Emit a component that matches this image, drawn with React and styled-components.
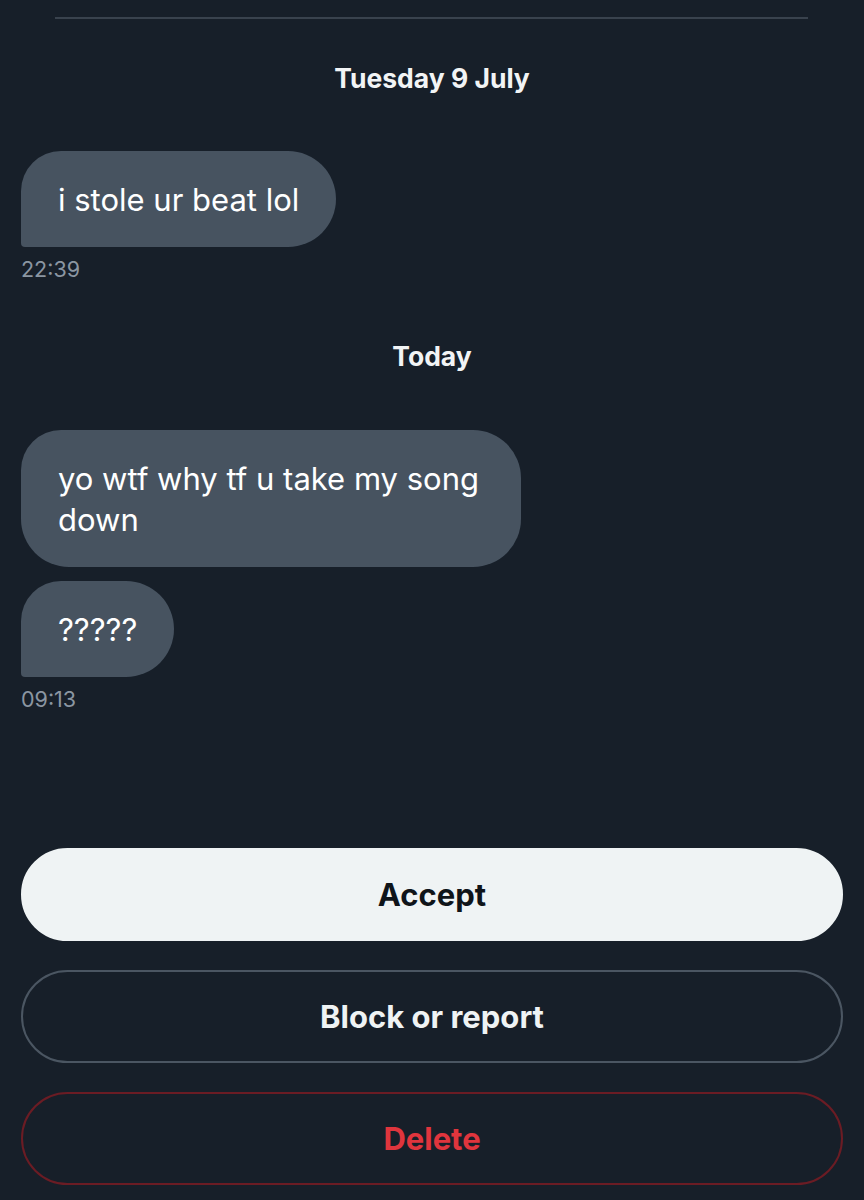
import styled, { createGlobalStyle } from 'styled-components';

const messages = [
  {
    day: 'Tuesday 9 July',
    groups: [{ bubbles: ['i stole ur beat lol'], time: '22:39' }],
  },
  {
    day: 'Today',
    groups: [{ bubbles: ['yo wtf why tf u take my song down', '?????'], time: '09:13' }],
  },
];

const App = () => {
  return (
    <Screen>
      <GlobalStyle />
      <Divider />
      {messages.map(section => (
        <Section key={section.day}>
          <DayLabel>{section.day}</DayLabel>
          {section.groups.map((group, i) => (
            <Group key={i}>
              {group.bubbles.map((text, j) => (
                <Bubble key={j} last={j === group.bubbles.length - 1}>
                  {text}
                </Bubble>
              ))}
              <Time>{group.time}</Time>
            </Group>
          ))}
        </Section>
      ))}
      <Actions>
        <Button variant="primary">Accept</Button>
        <Button>Block or report</Button>
        <Button variant="danger">Delete</Button>
      </Actions>
    </Screen>
  );
}

const GlobalStyle = createGlobalStyle`
  html, body {
    margin: 0;
    padding: 0;
    background: #171f29;
  }
  * {
    box-sizing: border-box;
  }
`

const Screen = styled.div`
  font-family: 'Inter', 'Noto Sans', sans-serif;
  background-color: #171f29;
  color: #e7e9ea;
  min-height: 100vh;
  display: flex;
  flex-direction: column;
  padding: 17px 21px 15px;
`

const Divider = styled.div`
  height: 2px;
  background-color: #39424d;
  margin: 0 35px 0 34px;
`

const Section = styled.div`
  display: flex;
  flex-direction: column;
`

const DayLabel = styled.div`
  text-align: center;
  font-weight: 700;
  font-size: 26.5px;
  line-height: 32px;
  color: #f2f4f5;
  margin-top: 43px;
  margin-bottom: 57px;
  ${Section} + ${Section} & {
    margin-top: 58px;
    margin-bottom: 58px;
  }
`

const Group = styled.div`
  display: flex;
  flex-direction: column;
  align-items: flex-start;
  gap: 14px;
`

const Bubble = styled.div`
  max-width: 500px;
  background-color: #475360;
  color: #ffffff;
  font-size: 31px;
  line-height: 41px;
  padding: 27.5px 37px;
  border-radius: ${props => props.last ? '40px 48px 48px 4px' : '40px 48px 48px 48px'};
`

const Time = styled.div`
  font-size: 21.5px;
  line-height: 26px;
  color: #8b96a2;
  margin-top: -5px;
`

const Actions = styled.div`
  margin-top: auto;
  display: flex;
  flex-direction: column;
  gap: 29px;
`

const Button = styled.button`
  height: 93px;
  width: 100%;
  border-radius: 47px;
  font-family: 'Inter', 'Noto Sans', sans-serif;
  font-weight: 700;
  font-size: 31px;
  cursor: pointer;
  background-color: ${props => props.variant === 'primary' ? '#eff3f4' : 'transparent'};
  color: ${props => props.variant === 'primary' ? '#0f1419' : props.variant === 'danger' ? '#e0353d' : '#eff3f4'};
  border: 2px solid ${props => props.variant === 'primary' ? '#eff3f4' : props.variant === 'danger' ? '#6b1c24' : '#4b5662'};
`

export default App;
